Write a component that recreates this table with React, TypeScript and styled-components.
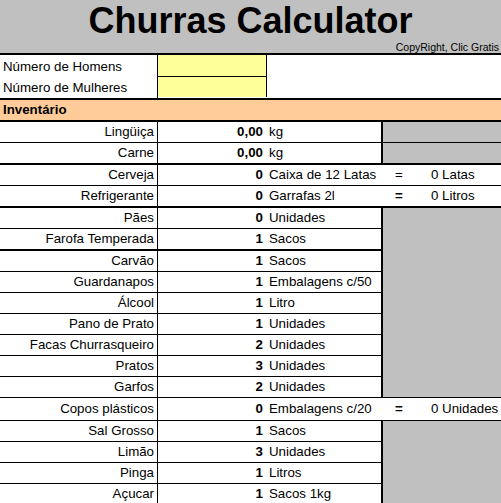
import React from 'react';
import styled, { createGlobalStyle, css } from 'styled-components';

const Global = createGlobalStyle`
  html, body { margin: 0; padding: 0; background: #fff; }
  body {
    font-family: "Liberation Sans", Arial, sans-serif;
    font-size: 13.3px;
    color: #000;
  }
  * { box-sizing: border-box; }
`;

const Sheet = styled.div`
  width: 501px;
  overflow: hidden;
`;

const Header = styled.header`
  height: 55px;
  padding-top: 1px;
  background: #c0c0c0;
  border-bottom: 2px solid #000;
  display: flex;
  flex-direction: column;
`;

const Title = styled.h1`
  margin: 0;
  font-size: 36px;
  line-height: 40px;
  font-weight: bold;
  text-align: center;
`;

const Copy = styled.div`
  font-size: 10.5px;
  line-height: 12px;
  text-align: right;
  padding-right: 2px;
`;

const InputRow = styled.div<{ $last?: boolean }>`
  display: flex;
  ${(p) => p.$last && 'border-bottom: 2px solid #000;'}
`;

const InputLabel = styled.div<{ $pad: number }>`
  width: 158px;
  padding-left: 3px;
  padding-top: ${(p) => p.$pad}px;
  line-height: 20px;
  border-right: 1px solid #000;
  white-space: nowrap;
`;

const InputCell = styled.div<{ $first?: boolean }>`
  width: 109px;
  height: ${(p) => (p.$first ? 22 : 20)}px;
  background: #ffff99;
  border-right: 1px solid #000;
  ${(p) => p.$first && 'border-bottom: 1px solid #000;'}
`;

const Section = styled.div`
  background: #ffcc99;
  font-weight: bold;
  line-height: 20px;
  padding-left: 3px;
  border-bottom: 2px solid #000;
`;

type Bottom = 0 | 1 | 2;

const bottom = css<{ $b: Bottom; $tall?: boolean }>`
  border-bottom: ${(p) => (p.$b ? `${p.$b}px solid #000` : 'none')};
  line-height: ${(p) => (p.$tall ? 22 : 20)}px;
`;

const ItemRow = styled.div`
  display: flex;
`;

const Label = styled.div<{ $b: Bottom; $tall?: boolean }>`
  ${bottom}
  width: 158px;
  text-align: right;
  padding-right: 3px;
  border-right: 1px solid #000;
  white-space: nowrap;
`;

const Num = styled.div<{ $b: Bottom; $tall?: boolean }>`
  ${bottom}
  width: 108px;
  text-align: right;
  padding-right: 3px;
  font-weight: bold;
`;

const Unit = styled.div<{ $b: Bottom; $tall?: boolean }>`
  ${bottom}
  width: 115px;
  padding-left: 3px;
  white-space: nowrap;
`;

const GraySide = styled.div<{ $b: Bottom; $tall?: boolean }>`
  ${bottom}
  flex: 1;
  background: #c0c0c0;
  border-left: 2px solid #000;
`;

const EqSide = styled.div<{ $b: Bottom; $tall?: boolean }>`
  ${bottom}
  flex: 1;
  display: flex;
  white-space: nowrap;
`;

const Eq = styled.span<{ $bold?: boolean }>`
  width: 36px;
  text-align: center;
  font-weight: ${(p) => (p.$bold ? 'bold' : 'normal')};
`;

const Val = styled.span`
  padding-left: 14px;
`;

type Side =
  | { kind: 'gray'; open?: boolean }
  | { kind: 'eq'; bold?: boolean; val: string };

interface Item {
  label: string;
  num: string;
  unit: string;
  side: Side;
  b?: Bottom;
  tall?: boolean;
}

const items: Item[] = [
  { label: 'Lingüiça', num: '0,00', unit: 'kg', side: { kind: 'gray' } },
  { label: 'Carne', num: '0,00', unit: 'kg', side: { kind: 'gray' }, b: 2 },
  { label: 'Cerveja', num: '0', unit: 'Caixa de 12 Latas', side: { kind: 'eq', val: '0 Latas' } },
  { label: 'Refrigerante', num: '0', unit: 'Garrafas 2l', side: { kind: 'eq', bold: true, val: '0 Litros' }, b: 2 },
  { label: 'Pães', num: '0', unit: 'Unidades', side: { kind: 'gray', open: true } },
  { label: 'Farofa Temperada', num: '1', unit: 'Sacos', side: { kind: 'gray', open: true }, b: 2 },
  { label: 'Carvão', num: '1', unit: 'Sacos', side: { kind: 'gray', open: true } },
  { label: 'Guardanapos', num: '1', unit: 'Embalagens c/50', side: { kind: 'gray', open: true } },
  { label: 'Álcool', num: '1', unit: 'Litro', side: { kind: 'gray', open: true } },
  { label: 'Pano de Prato', num: '1', unit: 'Unidades', side: { kind: 'gray', open: true } },
  { label: 'Facas Churrasqueiro', num: '2', unit: 'Unidades', side: { kind: 'gray', open: true } },
  { label: 'Pratos', num: '3', unit: 'Unidades', side: { kind: 'gray', open: true } },
  { label: 'Garfos', num: '2', unit: 'Unidades', side: { kind: 'gray' } },
  { label: 'Copos plásticos', num: '0', unit: 'Embalagens c/20', side: { kind: 'eq', bold: true, val: '0 Unidades' }, tall: true },
  { label: 'Sal Grosso', num: '1', unit: 'Sacos', side: { kind: 'gray', open: true } },
  { label: 'Limão', num: '3', unit: 'Unidades', side: { kind: 'gray', open: true } },
  { label: 'Pinga', num: '1', unit: 'Litros', side: { kind: 'gray', open: true } },
  { label: 'Açucar', num: '1', unit: 'Sacos 1kg', side: { kind: 'gray' } },
];

export default function App() {
  return (
    <Sheet>
      <Global />
      <Header>
        <Title>Churras Calculator</Title>
        <Copy>CopyRight, Clic Gratis</Copy>
      </Header>
      <InputRow>
        <InputLabel $pad={2}>Número de Homens</InputLabel>
        <InputCell $first />
      </InputRow>
      <InputRow $last>
        <InputLabel $pad={1}>Número de Mulheres</InputLabel>
        <InputCell />
      </InputRow>
      <Section>Inventário</Section>
      {items.map((it) => {
        const b: Bottom = it.b ?? 1;
        return (
          <ItemRow key={it.label}>
            <Label $b={b} $tall={it.tall}>{it.label}</Label>
            <Num $b={b} $tall={it.tall}>{it.num}</Num>
            <Unit $b={b} $tall={it.tall}>{it.unit}</Unit>
            {it.side.kind === 'gray' ? (
              <GraySide $b={it.side.open ? 0 : b} $tall={it.tall} />
            ) : (
              <EqSide $b={b} $tall={it.tall}>
                <Eq $bold={it.side.bold}>=</Eq>
                <Val>{it.side.val}</Val>
              </EqSide>
            )}
          </ItemRow>
        );
      })}
    </Sheet>
  );
}
